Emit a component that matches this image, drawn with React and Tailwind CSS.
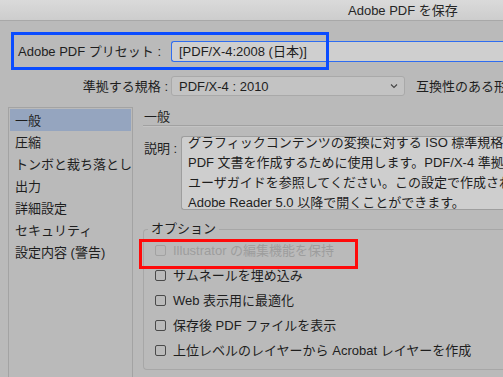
import React from "react";

const font = { fontFamily: '"Liberation Sans", "Noto Sans CJK JP", sans-serif' };

function Check({ label, disabled }) {
  return (
    <div className="flex items-center h-[25px]">
      <div
        className={
          "w-[11px] h-[11px] shrink-0 rounded-[2px] border ml-[11px] " +
          (disabled ? "border-[#a2a2a2]" : "border-[#4a4a4a]")
        }
      />
      <span
        className={
          "ml-[7px] text-[13px] whitespace-nowrap leading-none " +
          (disabled ? "text-[#9d9d9d]" : "text-[#1e1e1e]")
        }
      >
        {label}
      </span>
    </div>
  );
}

export default function App() {
  const items = [
    "一般",
    "圧縮",
    "トンボと裁ち落とし",
    "出力",
    "詳細設定",
    "セキュリティ",
    "設定内容 (警告)",
  ];
  return (
    <div
      className="relative w-[503px] h-[377px] overflow-hidden bg-[#bababa] text-[#1e1e1e] text-[13px]"
      style={font}
    >
      {/* Title bar */}
      <div className="h-[21px] bg-gradient-to-b from-[#dadada] to-[#cdcdcd] border-b border-[#a8a8a8] flex items-center pl-[348px] text-[13px] text-[#262626] whitespace-nowrap leading-none">
        Adobe PDF を保存
      </div>

      {/* Preset row */}
      <div className="mt-[20px] flex items-center h-[21px]">
        <div className="w-[171px] shrink-0 pl-[18px] whitespace-nowrap leading-none">
          Adobe PDF プリセット :
        </div>
        <div className="flex-1 min-w-0 h-[21px] bg-[#cfcfcf] border border-r-0 border-[#2f6df0] rounded-l-[3px] flex items-center pl-[7px] whitespace-nowrap leading-none">
          [PDF/X-4:2008 (日本)]
        </div>
      </div>

      {/* Standard row */}
      <div className="mt-[14px] flex items-center h-[20px]">
        <div className="w-[168px] shrink-0 text-right whitespace-nowrap leading-none">
          準拠する規格 :
        </div>
        <div className="ml-[3px] w-[234px] shrink-0 h-[20px] bg-[#c3c3c3] border border-[#a9a9a9] rounded-[3px] flex items-center pl-[7px] pr-[5px] leading-none">
          <span className="flex-1 whitespace-nowrap">PDF/X-4 : 2010</span>
          <svg width="8" height="6" viewBox="0 0 8 6" className="mr-[1px]">
            <path d="M1 1.5 L4 4.5 L7 1.5" fill="none" stroke="#444" strokeWidth="1.1" />
          </svg>
        </div>
        <div className="ml-[11px] min-w-0 overflow-hidden whitespace-nowrap leading-none">
          互換性のある形式 :
        </div>
      </div>

      {/* Main */}
      <div className="mt-[11px] flex">
        {/* list */}
        <div className="ml-[8px] w-[125px] h-[280px] border border-[#a3a3a3] p-[1px] shrink-0">
          {items.map((t, i) => (
            <div
              key={t}
              className={
                "h-[22px] flex items-center pl-[5px] whitespace-nowrap leading-none " +
                (i === 0 ? "bg-[#95a5bf]" : "")
              }
            >
              {t}
            </div>
          ))}
        </div>

        {/* right panel */}
        <div className="ml-[10px] flex-1 min-w-0">
          <div className="h-[18px] flex items-center pl-[1px] leading-none">一般</div>
          <div className="border-t border-[#a1a1a1] border-b-[1px] border-b-[#c4c4c4] h-[2px]" />
          <div className="mt-[9px] flex">
            <div className="w-[38px] shrink-0 pl-[1px] pt-[6px] whitespace-nowrap leading-none">
              説明 :
            </div>
            <div className="flex-1 min-w-0 h-[74px] bg-[#cecece] border border-r-0 border-[#9e9e9e] rounded-l-[3px] overflow-hidden">
              <div className="mt-[-4px] pl-[6px] leading-[20px] whitespace-nowrap">
                <div>グラフィックコンテンツの変換に対する ISO 標準規格</div>
                <div>PDF 文書を作成するために使用します。PDF/X-4 準拠</div>
                <div>ユーザガイドを参照してください。この設定で作成され</div>
                <div>Adobe Reader 5.0 以降で開くことができます。</div>
              </div>
            </div>
          </div>

          {/* Options fieldset */}
          <div className="mt-[19px] relative h-[141px] border border-r-0 border-[#a7a7a7] rounded-l-[4px]">
            <div className="absolute left-[4px] top-[-10px] px-[3px] bg-[#bababa] leading-[18px] whitespace-nowrap">
              オプション
            </div>
            <div className="pt-[8px]">
              <Check label="Illustrator の編集機能を保持" disabled />
              <Check label="サムネールを埋め込み" />
              <Check label="Web 表示用に最適化" />
              <Check label="保存後 PDF ファイルを表示" />
              <Check label="上位レベルのレイヤーから Acrobat レイヤーを作成" />
            </div>
          </div>
        </div>
      </div>

      {/* annotation overlays */}
      <div className="absolute left-[11px] top-[32px] w-[318px] h-[38px] border-[3px] border-[#0a4cff] pointer-events-none" />
      <div className="absolute left-[139px] top-[239px] w-[219px] h-[30px] border-[3px] border-[#ff0a0a] pointer-events-none" />
    </div>
  );
}
